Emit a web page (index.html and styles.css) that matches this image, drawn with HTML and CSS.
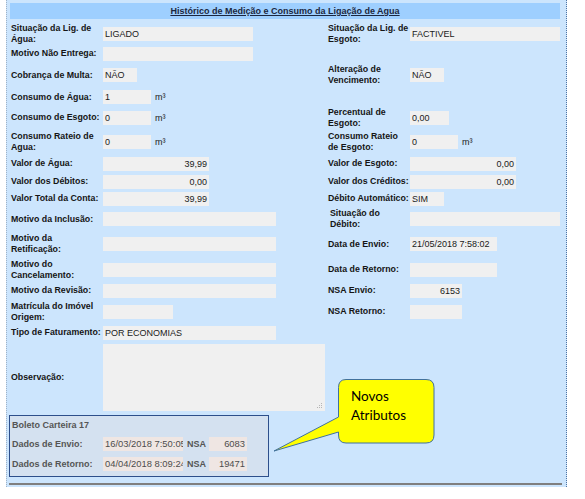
FILE: index.html
```html
<!DOCTYPE html>
<html lang="pt">
<head>
<meta charset="utf-8">
<link rel="stylesheet" href="styles.css">
</head>
<body>
<div class="panel">
  <div class="title"><span>Histórico de Medição e Consumo da Ligação de Agua</span></div>
  <div class="form">
    <div class="lbl">Situação da Lig. de<br>Água:</div>
    <div class="fld"><span class="in w150">LIGADO</span></div>
    <div class="lbl">Situação da Lig. de<br>Esgoto:</div>
    <div class="fld"><span class="in w150">FACTIVEL</span></div>

    <div class="lbl">Motivo Não Entrega:</div>
    <div class="fld"><span class="in w150"></span></div>
    <div class="lbl"></div>
    <div class="fld"></div>

    <div class="lbl">Cobrança de Multa:</div>
    <div class="fld"><span class="in w34">NÃO</span></div>
    <div class="lbl">Alteração de<br>Vencimento:</div>
    <div class="fld"><span class="in w34">NÃO</span></div>

    <div class="lbl">Consumo de Água:</div>
    <div class="fld"><span class="in w48">1</span><span class="unit">m³</span></div>
    <div class="lbl"></div>
    <div class="fld"></div>

    <div class="lbl">Consumo de Esgoto:</div>
    <div class="fld"><span class="in w48">0</span><span class="unit">m³</span></div>
    <div class="lbl">Percentual de<br>Esgoto:</div>
    <div class="fld"><span class="in w39">0,00</span></div>

    <div class="lbl">Consumo Rateio de<br>Agua:</div>
    <div class="fld"><span class="in w48">0</span><span class="unit">m³</span></div>
    <div class="lbl">Consumo Rateio<br>de Esgoto:</div>
    <div class="fld"><span class="in w48">0</span><span class="unit">m³</span></div>

    <div class="lbl">Valor de Água:</div>
    <div class="fld"><span class="in w106 num">39,99</span></div>
    <div class="lbl">Valor de Esgoto:</div>
    <div class="fld"><span class="in w106 num">0,00</span></div>

    <div class="lbl">Valor dos Débitos:</div>
    <div class="fld"><span class="in w106 num">0,00</span></div>
    <div class="lbl">Valor dos Créditos:</div>
    <div class="fld"><span class="in w106 num">0,00</span></div>

    <div class="lbl">Valor Total da Conta:</div>
    <div class="fld"><span class="in w106 num">39,99</span></div>
    <div class="lbl">Débito Automático:</div>
    <div class="fld"><span class="in w34">SIM</span></div>

    <div class="lbl">Motivo da Inclusão:</div>
    <div class="fld"><span class="in w173"></span></div>
    <div class="lbl ind">Situação do<br>Débito:</div>
    <div class="fld"><span class="in w150"></span></div>

    <div class="lbl">Motivo da<br>Retificação:</div>
    <div class="fld"><span class="in w173"></span></div>
    <div class="lbl">Data de Envio:</div>
    <div class="fld"><span class="in w87">21/05/2018 7:58:02</span></div>

    <div class="lbl">Motivo do<br>Cancelamento:</div>
    <div class="fld"><span class="in w173"></span></div>
    <div class="lbl">Data de Retorno:</div>
    <div class="fld"><span class="in w87"></span></div>

    <div class="lbl">Motivo da Revisão:</div>
    <div class="fld"><span class="in w173"></span></div>
    <div class="lbl">NSA Envio:</div>
    <div class="fld"><span class="in w52 num">6153</span></div>

    <div class="lbl">Matrícula do Imóvel<br>Origem:</div>
    <div class="fld"><span class="in w70"></span></div>
    <div class="lbl">NSA Retorno:</div>
    <div class="fld"><span class="in w52"></span></div>

    <div class="lbl">Tipo de Faturamento:</div>
    <div class="fld"><span class="in w173">POR ECONOMIAS</span></div>
    <div class="lbl"></div>
    <div class="fld"></div>

    <div class="lbl">Observação:</div>
    <div class="fld">
      <div class="obs">
        <svg class="grip" width="7" height="7" viewBox="0 0 7 7">
          <rect x="5" y="1" width="1" height="1" fill="#b5b5b5"/>
          <rect x="3" y="3" width="1" height="1" fill="#b5b5b5"/>
          <rect x="5" y="3" width="1" height="1" fill="#b5b5b5"/>
          <rect x="1" y="5" width="1" height="1" fill="#b5b5b5"/>
          <rect x="3" y="5" width="1" height="1" fill="#b5b5b5"/>
          <rect x="5" y="5" width="1" height="1" fill="#b5b5b5"/>
        </svg>
      </div>
    </div>
    <div class="lbl"></div>
    <div class="fld"></div>
  </div>

  <div class="boleto">
    <div class="btitle">Boleto Carteira 17</div>
    <div class="blbl">Dados de Envio:</div>
    <div class="bin">16/03/2018 7:50:05</div>
    <div class="bnsa">NSA</div>
    <div class="bin num">6083</div>
    <div class="blbl">Dados de Retorno:</div>
    <div class="bin">04/04/2018 8:09:24</div>
    <div class="bnsa">NSA</div>
    <div class="bin num">19471</div>
  </div>

  <div class="rule"></div>
</div>

<div class="callout">
  <svg class="bubble" width="170" height="80" viewBox="0 0 170 80">
    <path d="M76 4.5 H156 Q164 4.5 164 12.5 V60 Q164 68 156 68 H76 Q68.5 68 68.5 60 V57 L4 76 L68.5 42 V12.5 Q68.5 4.5 76 4.5 Z" fill="#ffff00" stroke="#41719c" stroke-width="1"/>
  </svg>
  <div class="ctext">Novos<br>Atributos</div>
</div>
</body>
</html>
```

FILE: styles.css
```css
html, body {
  margin: 0;
  padding: 0;
  background: #ffffff;
}

body {
  font-family: "Liberation Sans", Arial, sans-serif;
  font-size: 9px;
  color: #111;
}

.panel {
  box-sizing: border-box;
  margin-left: 6px;
  width: 561px;
  padding: 3px 6px 2px 3px;
  background: #cce5fd;
  border-left: 1px dotted #9fb3c8;
  border-right: 1px dotted #4f74a3;
}

.title {
  height: 16px;
  background: #9ecfff;
  display: flex;
  align-items: center;
  justify-content: center;
  font-weight: bold;
  color: #1c2740;
}

.title span {
  text-decoration: underline;
}

.form {
  margin-top: 3px;
  margin-left: 1px;
  display: grid;
  grid-template-columns: 92px 225px 82px 150px;
  grid-template-rows: 23px 17px 26px 18px 23px 25px 19px 17px 17px 24px 26px 25px 17px 25px 17px 73px;
  align-items: center;
}

.lbl {
  font-weight: bold;
  font-size: 8.8px;
  line-height: 11px;
  color: #151515;
  white-space: nowrap;
}

.lbl.ind {
  padding-left: 2px;
}

.fld {
  display: flex;
  align-items: center;
  gap: 4px;
}

.in {
  box-sizing: border-box;
  display: block;
  height: 14px;
  line-height: 14px;
  padding: 0 2px;
  background: #f0f0f0;
  color: #1a1a1a;
  white-space: nowrap;
  overflow: hidden;
}

.num { text-align: right; }

.w34 { width: 34px; }
.w39 { width: 39px; }
.w48 { width: 48px; }
.w52 { width: 52px; }
.w70 { width: 70px; }
.w87 { width: 87px; }
.w106 { width: 106px; }
.w150 { width: 150px; }
.w173 { width: 173px; }

.unit {
  color: #1a1a1a;
}

.obs {
  box-sizing: border-box;
  width: 222px;
  height: 67px;
  background: #f0f0f0;
  display: flex;
  justify-content: flex-end;
  align-items: flex-end;
  padding: 0 2px 2px 0;
}

.grip {
  display: block;
}

.boleto {
  box-sizing: border-box;
  margin-top: 1px;
  margin-left: -1px;
  width: 260px;
  height: 62px;
  border: 1px solid #2d4f8b;
  background: #d4e1f0;
  padding: 0 0 2px 2px;
  display: grid;
  grid-template-columns: 91px 80px 26px 38px;
  grid-template-rows: 18px 19px 21px;
  align-items: center;
  color: #555;
}

.btitle {
  grid-column: 1 / -1;
  font-weight: bold;
}

.blbl {
  font-weight: bold;
}

.bnsa {
  font-weight: bold;
  padding-left: 4px;
}

.bin {
  box-sizing: border-box;
  height: 14px;
  line-height: 14px;
  padding: 0 2px;
  font-size: 9.4px;
  background: #efe6e3;
  color: #4d4d4d;
  white-space: nowrap;
  overflow: hidden;
}

.rule {
  margin-top: 6px;
  margin-left: -1px;
  width: 553px;
  height: 2px;
  background: #7f7f7f;
}

.callout {
  position: absolute;
  left: 270px;
  top: 375px;
  width: 170px;
  height: 80px;
}

.bubble {
  position: absolute;
  left: 0;
  top: 0;
}

.ctext {
  position: absolute;
  left: 81px;
  top: 12px;
  font-family: Lato, "Open Sans", sans-serif;
  font-size: 13.5px;
  line-height: 19px;
  color: #000;
}
```
